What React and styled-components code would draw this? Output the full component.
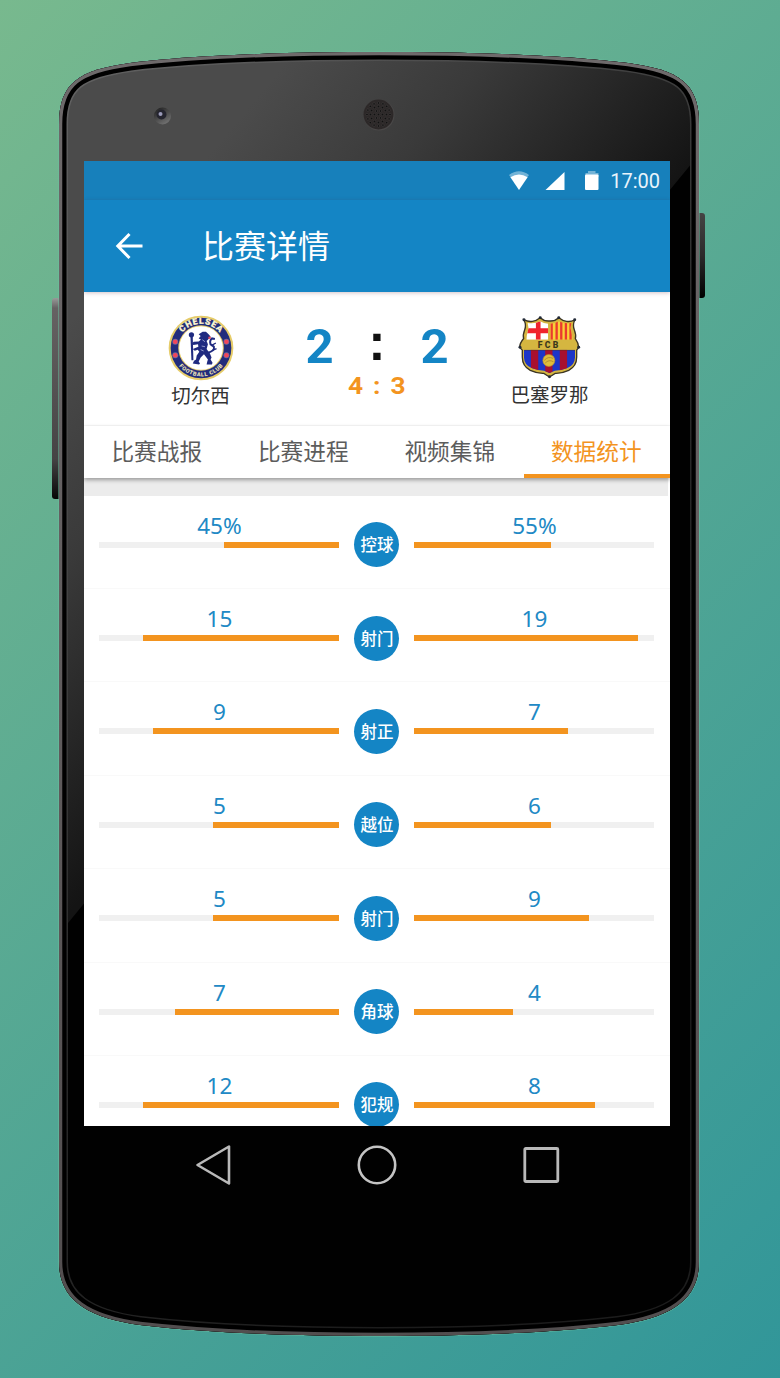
import React from 'react';
import styled, { createGlobalStyle } from 'styled-components';

const blue = '#1485c5';
const orange = '#f3941f';
const cjk = '"Noto Sans CJK SC", sans-serif';

const GlobalStyle = createGlobalStyle`
  * { box-sizing: border-box; }
  body { margin: 0; }
`;

const Page = styled.main`
  position: relative;
  width: 780px;
  height: 1378px;
  overflow: hidden;
  background: linear-gradient(135deg, #78b98e 0%, #319699 100%);
  font-family: ${cjk};
`;

const Shell = styled.svg`
  position: absolute;
  inset: 0;
`;

const Device = styled.div`
  position: relative;
  width: 586px;
  margin-left: 84px;
  padding-top: 161px;
`;

const Screen = styled.section`
  height: 965px;
  overflow: hidden;
  background: #fff;
`;

const StatusBar = styled.div`
  display: flex;
  align-items: center;
  justify-content: flex-end;
  height: 39px;
  padding-right: 10px;
  background: #1780bb;
`;

const StatusIcons = styled.svg`
  display: block;
  margin-right: 11px;
`;

const Clock = styled.time`
  color: #e9f4fb;
  padding-top: 1px;
  font: 20px/38px Roboto, sans-serif;
`;

const AppBar = styled.header`
  position: relative;
  display: flex;
  align-items: center;
  height: 92px;
  padding-left: 31px;
  gap: 58px;
  background: ${blue};
  box-shadow: 0 1px 4px rgba(80, 20, 40, 0.25);
`;

const Title = styled.h1`
  margin: 0;
  color: #fff;
  padding-bottom: 3px;
  font: 400 32px/89px ${cjk};
`;

const MatchHeader = styled.div`
  display: grid;
  grid-template-columns: 233px 120px 225px;
  height: 134px;
  border-bottom: 1px solid #f9f9f9;
`;

const Team = styled.div`
  display: flex;
  flex-direction: column;
  align-items: center;
  padding-top: ${(p) => p.$top}px;
`;

const TeamName = styled.span`
  color: #333;
  font: 400 19.5px/28px ${cjk};
  margin-top: ${(p) => p.$gap}px;
`;

const ScoreBox = styled.div`
  display: flex;
  flex-direction: column;
  align-items: center;
  padding-top: 30px;
`;

const Score = styled.div`
  display: grid;
  grid-template-columns: 88px 27px 88px;
  text-align: center;
  color: ${blue};
  font: 700 49px/50px Roboto, sans-serif;
`;

const Colon = styled.span`
  margin-top: -5px;
  color: #111;
  font: 700 52px/50px "Liberation Sans", sans-serif;
`;

const SubScore = styled.div`
  display: flex;
  gap: 9px;
  color: ${orange};
  font: 700 23.5px/28px Roboto, sans-serif;
  transform: scaleX(1.12);
`;

const Tabs = styled.nav`
  position: relative;
  display: grid;
  grid-template-columns: repeat(4, 1fr);
  height: 52px;
  background: #fff;
  box-shadow: 0 2px 4px rgba(0, 0, 0, 0.35);
`;

const Tab = styled.span`
  display: block;
  height: 52px;
  padding-right: 1px;
  text-align: center;
  color: ${(p) => (p.$active ? orange : '#5c5c5c')};
  font: 400 22.7px/49px ${cjk};
  border-bottom: 4px solid ${(p) => (p.$active ? orange : 'transparent')};
`;

const Divider = styled.div`
  height: 17.8px;
  margin-right: 2px;
  background: #ececec;
`;

const StatRow = styled.div`
  display: grid;
  grid-template-columns: 240px 45px 240px;
  column-gap: 15px;
  height: 93.35px;
  padding-left: 15.4px;
  border-bottom: 1px solid #f9f9f9;
`;

const Side = styled.div`
  padding-top: 15px;
`;

const Value = styled.div`
  color: #2189c5;
  padding-bottom: 2px;
  font: 400 22.5px/29px "Noto Sans", sans-serif;
  text-align: center;
`;

const Track = styled.div`
  display: flex;
  justify-content: ${(p) => (p.$left ? 'flex-end' : 'flex-start')};
  height: 6px;
  background: #f0f0f0;
`;

const Bar = styled.div`
  height: 6px;
  background: ${orange};
`;

const Badge = styled.div`
  width: 45px;
  height: 45px;
  margin-top: 26.5px;
  border-radius: 50%;
  background: ${blue};
  color: #fff;
  text-align: center;
  font: 500 16.5px/45px ${cjk};
`;

const NavBar = styled.div`
  display: flex;
  align-items: center;
  justify-content: space-between;
  height: 78px;
  padding: 0 110px 0 110px;
`;

const stats = [
  ['控球', '45%', '55%', 115.5, 137],
  ['射门', '15', '19', 196.5, 224],
  ['射正', '9', '7', 186, 153.5],
  ['越位', '5', '6', 126.5, 137],
  ['射门', '5', '9', 126.5, 175],
  ['角球', '7', '4', 164, 99],
  ['犯规', '12', '8', 196.5, 181],
];

const tabs = ['比赛战报', '比赛进程', '视频集锦', '数据统计'];

const body =
  'M59 1262V124C59 82 80 70 130 63C208 54 300 52 379 52S550 54 628 63C678 70 699 82 699 124V1262C699 1300 670 1318 618 1325C540 1334 450 1336 379 1336S218 1334 140 1325C88 1318 59 1300 59 1262Z';

const holes = [];
[[0, 1], [4, 6], [8, 12], [11.5, 16]].forEach(([r, n]) => {
  for (let i = 0; i < n; i++) {
    const a = (i / n) * Math.PI * 2;
    holes.push([378.5 + r * Math.cos(a), 114.5 + r * Math.sin(a)]);
  }
});

function PhoneShell() {
  return (
    <Shell width="780" height="1378" viewBox="0 0 780 1378">
      <defs>
        <linearGradient id="glare" gradientUnits="userSpaceOnUse" x1="200" y1="166" x2="490" y2="407">
          <stop offset="0" stopColor="#4b4b4b" />
          <stop offset="0.4" stopColor="#3a3a3a" />
          <stop offset="1" stopColor="#141414" />
        </linearGradient>
        <linearGradient id="rim" x1="0" y1="0" x2="0" y2="1">
          <stop offset="0" stopColor="#6e6a6b" />
          <stop offset="1" stopColor="#524e4f" />
        </linearGradient>
        <linearGradient id="lip" x1="0" y1="0" x2="0.5" y2="1">
          <stop offset="0" stopColor="#646464" />
          <stop offset="0.6" stopColor="#2a2a2a" />
          <stop offset="1" stopColor="#1c1c1c" />
        </linearGradient>
        <linearGradient id="key" x1="0" y1="0" x2="0" y2="1">
          <stop offset="0" stopColor="#999" />
          <stop offset="0.05" stopColor="#666263" />
          <stop offset="0.8" stopColor="#454344" />
          <stop offset="1" stopColor="#060606" />
        </linearGradient>
        <linearGradient id="lens" x1="0.2" y1="0" x2="0.8" y2="1">
          <stop offset="0" stopColor="#222" />
          <stop offset="1" stopColor="#777" />
        </linearGradient>
        <linearGradient id="power" x1="0" y1="0" x2="0" y2="1">
          <stop offset="0" stopColor="#444" />
          <stop offset="0.5" stopColor="#2c2a2b" />
          <stop offset="1" stopColor="#000" />
        </linearGradient>
        <clipPath id="bodyClip"><path d={body} /></clipPath>
      </defs>
      <rect x="52" y="298" width="12" height="201" rx="3" fill="url(#key)" />
      <rect x="694" y="213" width="11" height="85" rx="3" fill="url(#power)" />
      <path d={body} fill="none" stroke="#6abfa0" strokeOpacity="0.5" strokeWidth="2" />
      <g clipPath="url(#bodyClip)">
        <rect x="50" y="45" width="660" height="1300" fill="#010101" />
        <path d="M50 45H710V141L50 945Z" fill="url(#glare)" />
        <path d={body} fill="none" stroke="url(#lip)" strokeWidth="18" />
        <path d={body} fill="none" stroke="#000" strokeWidth="15" />
        <path d={body} fill="none" stroke="url(#rim)" strokeWidth="6.5" />
      </g>
      <circle cx="162.5" cy="116" r="8.5" fill="url(#lens)" />
      <circle cx="161.5" cy="114.5" r="5" fill="#24242e" />
      <circle cx="160.5" cy="114" r="2" fill="#9a9ab8" />
      <circle cx="379" cy="115" r="15.5" fill="#4a4848" />
      <circle cx="378.5" cy="114.5" r="15" fill="#2c2828" />
      {holes.map(([x, y], i) => (
        <circle key={i} cx={x} cy={y} r="1.2" fill="#111" stroke="#484444" strokeWidth="0.5" />
      ))}
    </Shell>
  );
}

function ChelseaCrest() {
  return (
    <svg width="68" height="68" viewBox="52 40 206 206">
      <defs>
        <path id="chelseaTop" d="M82 143a73 73 0 0 1 146 0" />
        <path id="chelseaBottom" d="M69 143a86 86 0 0 0 172 0" />
      </defs>
      <circle cx="155" cy="143" r="98" fill="#e6cc69" />
      <circle cx="155" cy="143" r="92" fill="#222c7c" />
      <circle cx="155" cy="143" r="69" fill="#e6cc69" />
      <circle cx="155" cy="143" r="66" fill="#fff" />
      <text fill="#fbf5d0" stroke="#fbf5d0" strokeWidth="0.8" fontFamily="Roboto, sans-serif" fontWeight="900" fontSize="26" textAnchor="middle">
        <textPath href="#chelseaTop" startOffset="50%" textLength="128">CHELSEA</textPath>
      </text>
      <text fill="#e9e2b8" fontFamily="Roboto, sans-serif" fontWeight="900" fontSize="17" textAnchor="middle">
        <textPath href="#chelseaBottom" startOffset="50%" textLength="152">FOOTBALL CLUB</textPath>
      </text>
      {[[77, 124], [232, 124], [77, 165], [232, 165]].map(([x, y]) => (
        <g key={`${x}-${y}`}>
          <circle cx={x} cy={y} r="9" fill="#f2dede" opacity="0.35" />
          <circle cx={x} cy={y} r="7" fill="#f2465a" />
        </g>
      ))}
      <g fill="#1f2a80">
        <circle cx="126" cy="103" r="8" />
        <path d="M123 108h7l2 72h-6z" />
        <path d="M148 101L160 94L170 94L178 101L184 108L178 116L172 122L176 132L172 146L182 160L187 172L184 178L190 188L188 193H172L174 184L176 178L164 162L154 172L148 184L152 190L149 193L130 190L134 182L140 178L142 166L150 154L145 148L136 151L130 146L147 139L146 132L132 134L127 129L133 124L148 123L155 117L148 114L154 107Z" />
      </g>
      <path d="M174 158Q198 152 194 139L184 132Q180 120 188 114L197 116" fill="none" stroke="#1f2a80" strokeWidth="6" />
      <path d="M186 136L200 128M190 150L202 145" stroke="#1f2a80" strokeWidth="4" />
      <circle cx="181" cy="112" r="4" fill="#e9495b" />
      <path d="M159 118l8 6M157 137l10 2M154 148l9 4" stroke="#aab0dc" strokeWidth="2.5" />
    </svg>
  );
}

function BarcaCrest() {
  const shield =
    'M103 62Q117 68 128 66Q141 64 152 55Q164 66 180 65Q196 66 208 55Q219 64 232 66Q243 68 256 62Q249 78 255 92Q261 107 258 118Q268 132 268 145L262 153V174Q262 202 238 214Q216 224 197 223L180 234L163 223Q144 224 122 214Q98 202 98 174V153L90 145Q90 132 102 118Q99 107 105 92Q111 78 103 62Z';
  return (
    <svg width="63" height="63" viewBox="85 50 190 190">
      <defs>
        <clipPath id="crestLower"><path d="M103 152H257V175Q256 198 234 207Q214 215 196 215L180 222L164 215Q146 215 126 207Q104 198 103 175Z" /></clipPath>
        <clipPath id="crestLeft"><path d="M114 71Q137 74 152 66Q162 73 176 73V122H110Q111 108 114 98Q119 85 114 71Z" /></clipPath>
        <clipPath id="crestRight"><path d="M182 73Q198 73 208 66Q223 74 246 71Q241 85 246 98Q249 108 250 122H182Z" /></clipPath>
      </defs>
      <path d={shield} fill="#d5b640" stroke="#3a3423" strokeWidth="4" />
      {[[103, 61], [152, 55], [208, 55], [256, 61], [91, 144], [268, 144], [180, 233]].map(([x, y]) => (
        <circle key={`${x}-${y}`} cx={x} cy={y} r="4.5" fill="#222a38" />
      ))}
      <g clipPath="url(#crestLeft)">
        <rect x="100" y="60" width="80" height="70" fill="#fff" />
        <path d="M139 60h14v64h-14zM105 87h75v15h-75z" fill="#f0232d" />
      </g>
      <g clipPath="url(#crestRight)">
        <rect x="180" y="60" width="80" height="70" fill="#f9cf37" />
        {[183, 198, 212, 226, 240].map((x) => <rect key={x} x={x} y="60" width="7" height="70" fill="#ea3a2e" />)}
      </g>
      <g clipPath="url(#crestLower)">
        <rect x="95" y="150" width="170" height="80" fill="#1c35c8" />
        {[124, 167, 211].map((x) => <rect key={x} x={x} y="150" width="22" height="80" fill="#a8102f" />)}
        <path d="M98 152H262" stroke="#4a3512" strokeWidth="3" />
      </g>
      <text x="179" y="147" textAnchor="middle" letterSpacing="7" fontFamily="Roboto, sans-serif" fontWeight="900" fontSize="26" fill="#3c381b">FCB</text>
      <circle cx="178" cy="184" r="18" fill="#e0bd3b" stroke="#b8932e" strokeWidth="2" />
      <path d="M164 184Q176 170 191 178M167 192Q178 180 192 188" fill="none" stroke="#a98530" strokeWidth="2.5" />
    </svg>
  );
}

export default function App() {
  return (
    <Page>
      <GlobalStyle />
      <PhoneShell />
      <Device>
        <Screen>
          <StatusBar>
            <StatusIcons width="90" height="22" viewBox="0 0 90 22" fill="#fff">
              <path d="M0 5Q10-2.5 20 5L17.8 8Q10 2.2 2.2 8Z" opacity="0.4" />
              <path d="M1.4 7.3Q10 1.5 18.6 7.3L10 20Z" />
              <path d="M55.5 2V20H36.5Z" />
              <path d="M79 1h7.5v2h3v4h-13V3H79z" opacity="0.4" />
              <rect x="76" y="4.5" width="13.5" height="15.5" rx="1" />
            </StatusIcons>
            <Clock>17:00</Clock>
          </StatusBar>
          <AppBar>
            <svg width="29" height="28" viewBox="0 0 29 28" fill="none" stroke="#fff" strokeWidth="3">
              <path d="M14.5 2L2.8 14L14.5 26M3 14H27.5" />
            </svg>
            <Title>比赛详情</Title>
          </AppBar>
          <MatchHeader>
            <Team $top={22}>
              <ChelseaCrest />
              <TeamName $gap={-1}>切尔西</TeamName>
            </Team>
            <ScoreBox>
              <Score>
                <span>2</span>
                <Colon>:</Colon>
                <span>2</span>
              </Score>
              <SubScore>
                <span>4</span>
                <span>:</span>
                <span>3</span>
              </SubScore>
            </ScoreBox>
            <Team $top={24}>
              <BarcaCrest />
              <TeamName $gap={1}>巴塞罗那</TeamName>
            </Team>
          </MatchHeader>
          <Tabs>
            {tabs.map((t, i) => <Tab key={t} $active={i === 3}>{t}</Tab>)}
          </Tabs>
          <Divider />
          {stats.map(([name, home, away, left, right], i) => (
            <StatRow key={i}>
              <Side>
                <Value>{home}</Value>
                <Track $left><Bar style={{ width: left }} /></Track>
              </Side>
              <Badge>{name}</Badge>
              <Side>
                <Value>{away}</Value>
                <Track><Bar style={{ width: right }} /></Track>
              </Side>
            </StatRow>
          ))}
        </Screen>
        <NavBar>
          <svg width="38" height="42" viewBox="0 0 38 42" fill="none" stroke="#b9b9b9" strokeWidth="2.6" strokeLinejoin="round">
            <path d="M3.5 21L35 2.5V39.5Z" />
          </svg>
          <svg width="42" height="42" viewBox="0 0 42 42" fill="none" stroke="#c4c4c4" strokeWidth="2.6">
            <circle cx="21" cy="21" r="18.2" />
          </svg>
          <svg width="38" height="38" viewBox="0 0 38 38" fill="none" stroke="#b9b9b9" strokeWidth="2.8">
            <rect x="2.8" y="2.5" width="33" height="33" rx="1" />
          </svg>
        </NavBar>
      </Device>
    </Page>
  );
}
